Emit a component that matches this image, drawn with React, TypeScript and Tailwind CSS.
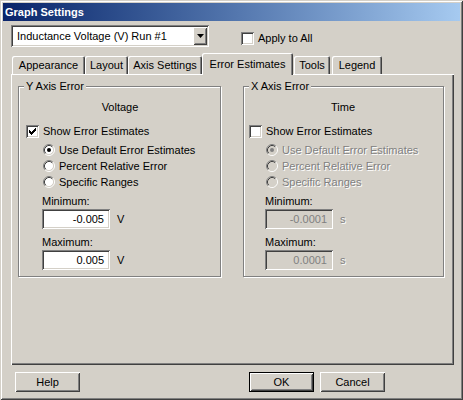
import React from "react";

const sunken =
  "shadow-[inset_1px_1px_0_#808080,inset_-1px_-1px_0_#ffffff,inset_2px_2px_0_#404040,inset_-2px_-2px_0_#d4d0c8]";
const raised =
  "shadow-[inset_1px_1px_0_#ffffff,inset_-1px_-1px_0_#404040,inset_2px_2px_0_#d4d0c8,inset_-2px_-2px_0_#808080]";
const disabledText = "text-[#808080] [text-shadow:1px_1px_0_#ffffff]";

function CheckBox({ checked }: { checked?: boolean }) {
  const ys = [5, 6, 7, 6, 5, 4, 3];
  return (
    <div className={`relative w-[13px] h-[13px] shrink-0 bg-white ${sunken}`}>
      {checked && (
        <svg className="absolute left-0 top-0" width="13" height="13" viewBox="0 0 13 13">
          {ys.map((y, i) => (
            <rect key={i} x={3 + i} y={y} width="1" height="3" fill="#000" />
          ))}
        </svg>
      )}
    </div>
  );
}

function Radio({ checked, disabled }: { checked?: boolean; disabled?: boolean }) {
  return (
    <svg width="12" height="12" viewBox="0 0 12 12" className="shrink-0">
      <circle cx="6" cy="6" r="4.5" fill={disabled ? "#d4d0c8" : "#ffffff"} />
      <path d="M2.11 9.89 A5.5 5.5 0 0 1 9.89 2.11" stroke="#808080" fill="none" />
      <path d="M9.89 2.11 A5.5 5.5 0 0 1 2.11 9.89" stroke="#ffffff" fill="none" />
      <path d="M2.82 9.18 A4.5 4.5 0 0 1 9.18 2.82" stroke="#404040" fill="none" />
      <path d="M9.18 2.82 A4.5 4.5 0 0 1 2.82 9.18" stroke="#d4d0c8" fill="none" />
      {checked && <circle cx="6" cy="6" r="2" fill={disabled ? "#808080" : "#000000"} />}
    </svg>
  );
}

function Tab({ label, w, selected, extra }: { label: string; w: string; selected?: boolean; extra?: string }) {
  if (selected) {
    return (
      <div
        className={`relative z-10 ${w} h-[22px] -mb-[1px] bg-[#d4d0c8] rounded-t-[2px] shadow-[inset_1px_1px_0_#ffffff,inset_-1px_0_0_#404040,inset_-2px_0_0_#808080] flex justify-center pt-[5px] leading-[13px]`}
      >
        {label}
      </div>
    );
  }
  return (
    <div
      className={`${w} ${extra ?? ""} h-[18px] bg-[#d4d0c8] rounded-t-[2px] shadow-[inset_1px_1px_0_#ffffff,inset_-1px_0_0_#404040,inset_-2px_0_0_#808080] flex justify-center pt-[3px] leading-[13px]`}
    >
      {label}
    </div>
  );
}

function Button({ label, def, extra }: { label: string; def?: boolean; extra?: string }) {
  return (
    <div
      className={`w-[65px] h-[20px] flex items-center justify-center bg-[#d4d0c8] ${raised} ${def ? "border border-black" : ""} ${extra ?? ""}`}
    >
      {label}
    </div>
  );
}

function Field({ value, unit, disabled }: { value: string; unit: string; disabled?: boolean }) {
  return (
    <div className="flex items-center">
      <div
        className={`w-[68px] h-[20px] flex items-center justify-end pr-[6px] ${sunken} ${disabled ? "bg-[#d4d0c8] text-[#808080]" : "bg-white"}`}
      >
        {value}
      </div>
      <span className={`ml-[7px] ${disabled ? disabledText : ""}`}>{unit}</span>
    </div>
  );
}

function Group({
  title,
  heading,
  w,
  pl,
  enabled,
  min,
  max,
  unit,
}: {
  title: string;
  heading: string;
  w: string;
  pl: string;
  enabled: boolean;
  min: string;
  max: string;
  unit: string;
}) {
  const dis = !enabled;
  const rt = dis ? disabledText : "";
  return (
    <div
      className={`relative ${w} border border-[#808080] shadow-[inset_1px_1px_0_#ffffff,1px_1px_0_#ffffff] flex flex-col pt-[12px] pb-[6px] ${pl}`}
    >
      <span className="absolute -top-[7px] left-[5px] px-[2px] bg-[#d4d0c8] leading-[13px]">{title}</span>
      <div className="h-[16px] leading-[16px] text-center -ml-[6px]">{heading}</div>
      <div className="mt-[8px] h-[16px] flex items-center gap-[4px]">
        <CheckBox checked={enabled} />
        <span>Show Error Estimates</span>
      </div>
      <div className="mt-[3px] ml-[17px] flex flex-col">
        <div className="h-[16px] flex items-center gap-[4px]">
          <Radio checked disabled={dis} />
          <span className={rt}>Use Default Error Estimates</span>
        </div>
        <div className="h-[16px] flex items-center gap-[4px]">
          <Radio disabled={dis} />
          <span className={rt}>Percent Relative Error</span>
        </div>
        <div className="h-[16px] flex items-center gap-[4px]">
          <Radio disabled={dis} />
          <span className={rt}>Specific Ranges</span>
        </div>
      </div>
      <div className="ml-[16px] flex flex-col">
        <div className="mt-[3px] h-[16px] leading-[16px]">Minimum:</div>
        <Field value={min} unit={unit} disabled={dis} />
        <div className="mt-[5px] h-[16px] leading-[16px]">Maximum:</div>
        <Field value={max} unit={unit} disabled={dis} />
      </div>
    </div>
  );
}

export default function App() {
  return (
    <div
      className="w-[463px] h-[400px] bg-[#d4d0c8] p-[3px] flex flex-col font-['Liberation_Sans',Arial,sans-serif] text-[11px] leading-[13px] text-black shadow-[inset_1px_1px_0_#d4d0c8,inset_-1px_-1px_0_#404040,inset_2px_2px_0_#ffffff,inset_-2px_-2px_0_#808080]"
    >
      {/* Title bar */}
      <div className="h-[18px] shrink-0 flex items-center pl-[2px] bg-gradient-to-r from-[#0a246a] to-[#a6caf0] text-white font-bold">
        Graph Settings
      </div>

      <div className="flex flex-col pl-[8px]">
        {/* Top row */}
        <div className="mt-[4px] flex items-start">
          <div className={`w-[198px] h-[22px] bg-white flex items-center pl-[6px] pr-[2px] ${sunken}`}>
            <span>Inductance Voltage (V) Run #1</span>
            <div className={`ml-auto w-[14px] h-[18px] bg-[#d4d0c8] flex items-center justify-center ${raised}`}>
              <svg width="7" height="4" viewBox="0 0 7 4">
                <path d="M0 0 H7 L3.5 4 Z" fill="#000" />
              </svg>
            </div>
          </div>
          <div className="ml-[32px] mt-[7px] flex items-center gap-[4px]">
            <CheckBox />
            <span>Apply to All</span>
          </div>
        </div>

        {/* Tabs */}
        <div className="mt-[6px] h-[21px] flex items-end pl-[1px]">
          <Tab label="Appearance" w="w-[73px]" />
          <Tab label="Layout" w="w-[43px]" />
          <Tab label="Axis Settings" w="w-[74px]" />
          <Tab label="Error Estimates" w="w-[91px]" selected />
          <Tab label="Tools" w="w-[36px]" extra="ml-[1px]" />
          <Tab label="Legend" w="w-[50px]" extra="ml-[2px]" />
        </div>

        {/* Panel */}
        <div
          className="w-[443px] h-[291px] shrink-0 shadow-[inset_1px_1px_0_#ffffff,inset_-1px_-1px_0_#404040,inset_-2px_-2px_0_#808080] flex items-start pt-[12px] pl-[7px]"
        >
          <Group
            title="Y Axis Error"
            heading="Voltage"
            w="w-[203px]"
            pl="pl-[7px]"
            enabled
            min="-0.005"
            max="0.005"
            unit="V"
          />
          <div className="ml-[22px]">
            <Group
              title="X Axis Error"
              heading="Time"
              w="w-[201px]"
              pl="pl-[5px]"
              enabled={false}
              min="-0.0001"
              max="0.0001"
              unit="s"
            />
          </div>
        </div>

        {/* Buttons */}
        <div className="mt-[7px] flex">
          <Button label="Help" extra="ml-[4px]" />
          <Button label="OK" def extra="ml-[169px]" />
          <Button label="Cancel" extra="ml-[6px]" />
        </div>
      </div>
    </div>
  );
}
